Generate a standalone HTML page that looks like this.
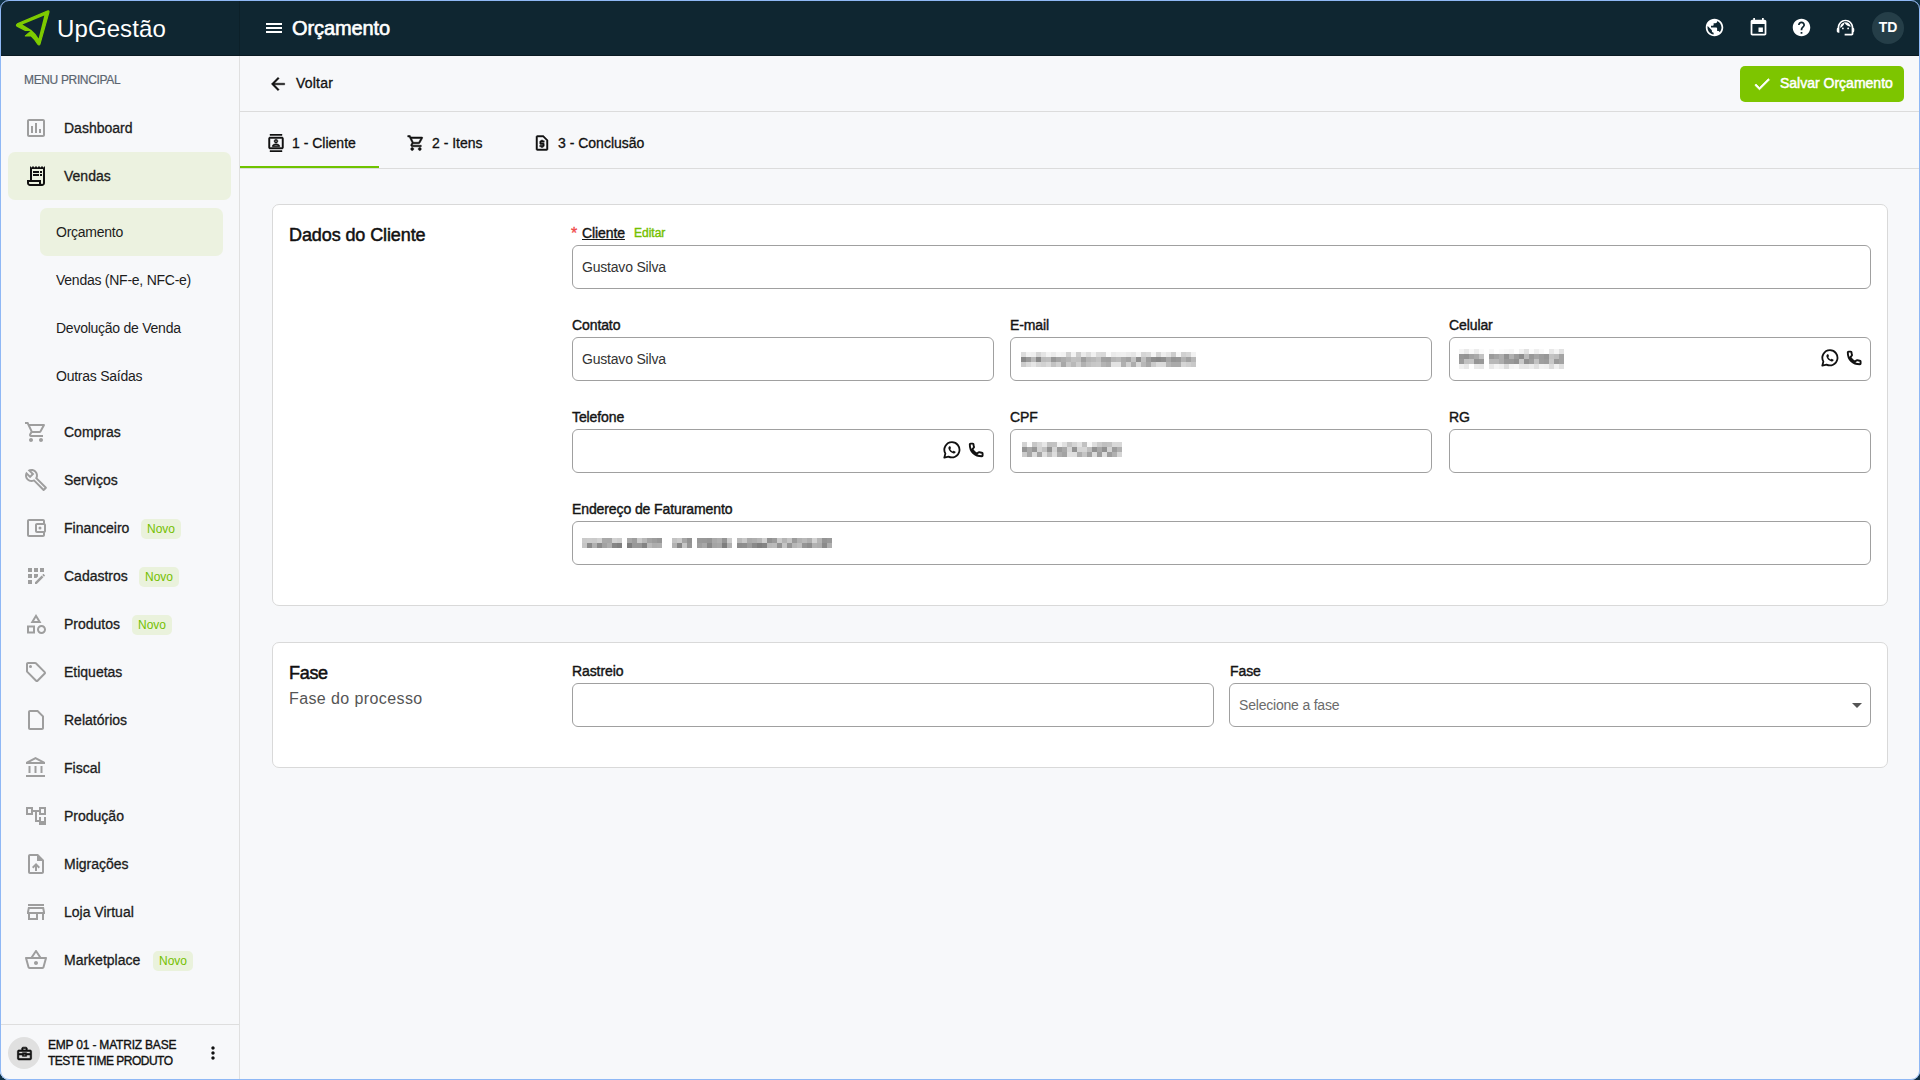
<!DOCTYPE html>
<html><head><meta charset="utf-8">
<style>
*{box-sizing:border-box;margin:0;padding:0}
html,body{width:1920px;height:1080px;overflow:hidden;background:#0f3246}
body{font-family:"Liberation Sans",sans-serif;color:#1c1c1c;position:relative}
.a{position:absolute}
.win{position:absolute;left:0;top:0;width:1920px;height:1080px;border-radius:9px;overflow:hidden;background:#f7f8fa}
.frame{position:absolute;left:0;top:0;width:1920px;height:1080px;border:1px solid #8fb8f5;border-radius:9px;pointer-events:none}
.hdr{position:absolute;left:0;top:0;width:1920px;height:56px;background:#0f2631;border-bottom:1px solid #0a1a22}
.side{position:absolute;left:0;top:56px;width:240px;height:1024px;background:#f7f8fa;border-right:1px solid #e0e0e0}
.med{-webkit-text-stroke:0.3px currentColor}
.t14{font-size:14px;line-height:16px;white-space:nowrap}
.ico{position:absolute;fill:#9e9e9e}
.mi{position:absolute;left:64px;font-size:14px;line-height:16px;white-space:nowrap;color:#1c1c1c;-webkit-text-stroke:0.3px #1c1c1c}
.si{position:absolute;left:56px;font-size:14px;line-height:16px;letter-spacing:-0.25px;white-space:nowrap;color:#1c1c1c}
.novo{position:absolute;height:20px;padding:0 6px;border-radius:5px;background:#eaf2dc;color:#74c000;font-size:12px;line-height:20px}
.card{position:absolute;left:272px;width:1616px;background:#fff;border:1px solid #d9d9d9;border-radius:7px}
.lbl{position:absolute;font-size:14px;line-height:16px;white-space:nowrap;letter-spacing:-0.1px;color:#141414;-webkit-text-stroke:0.4px #141414}
.inp{position:absolute;height:44px;border:1px solid #a0a0a0;border-radius:6px;background:#fff}
.val{position:absolute;left:9px;top:13px;font-size:14px;line-height:16px;color:#333;white-space:nowrap;letter-spacing:-0.2px}
.mz{position:absolute;background:repeating-linear-gradient(90deg,#c9c9c9 0 8px,#b3b3b3 8px 12px,#d8d8d8 12px 16px,#bdbdbd 16px 24px,#e6e6e6 24px 28px,#c2c2c2 28px 36px);opacity:.9}
</style></head><body>
<div class="win">
  <!-- HEADER -->
  <div class="hdr">
    <svg class="a" style="left:0;top:0" width="60" height="56" viewBox="0 0 60 56"><path fill="#7ecb00" stroke="#7ecb00" stroke-width="1.2" stroke-linejoin="round" d="M17.5 26.4 Q15.4 25.2 17.3 23.9 L47.4 11 Q49.3 10.4 48.9 12.4 L40 43.9 Q39.1 45.8 37.8 44.1 Q34.9 39.4 31 35.9 L25.4 35.9 L31.1 30.5 L25.8 30.6 Z"/><path fill="#0f2631" d="M22.4 24.5 L44.3 15.4 L38.6 38.6 Q35.8 33.4 31.4 30 Z"/><path fill="#0f2631" d="M24.8 31.3 L30.4 30.95 L24.9 35.3 Z"/></svg>
    <div class="a" style="left:57px;top:13.5px;font-size:24px;line-height:30px;color:#fff;white-space:nowrap;letter-spacing:0.1px">UpGestão</div>
    <div class="a" style="left:239px;top:0;width:1px;height:55px;background:#0c2029"></div>
    <div class="a" style="left:266px;top:23px;width:16px;height:2px;background:#fff"></div><div class="a" style="left:266px;top:27px;width:16px;height:2px;background:#fff"></div><div class="a" style="left:266px;top:31px;width:16px;height:2px;background:#fff"></div>
    <div class="a" style="left:292px;top:17px;font-size:20px;line-height:22px;color:#fff;-webkit-text-stroke:0.6px #fff;white-space:nowrap;letter-spacing:-0.1px">Orçamento</div>
    <!-- right icons -->
    <svg class="a" style="left:1703.6px;top:17.3px" width="21" height="21" viewBox="0 0 24 24"><path fill="#fff" d="M12 2C6.48 2 2 6.48 2 12s4.48 10 10 10 10-4.48 10-10S17.52 2 12 2zm-1 17.93c-3.95-.49-7-3.85-7-7.93 0-.62.08-1.21.21-1.79L9 15v1c0 1.1.9 2 2 2v1.93zm6.9-2.54c-.26-.81-1-1.39-1.9-1.39h-1v-3c0-.55-.45-1-1-1H8v-2h2c.55 0 1-.45 1-1V7h2c1.1 0 2-.9 2-2v-.41c2.93 1.19 5 4.06 5 7.41 0 2.08-.8 3.97-2.1 5.39z"/></svg>
    <svg class="a" style="left:1747.7px;top:17.3px" width="21" height="21" viewBox="0 0 24 24"><path fill="#fff" d="M17 12h-5v5h5v-5zM16 1v2H8V1H6v2H5c-1.11 0-1.99.9-1.99 2L3 19c0 1.1.89 2 2 2h14c1.1 0 2-.9 2-2V5c0-1.1-.9-2-2-2h-1V1h-2zm3 18H5V8h14v11z"/></svg>
    <svg class="a" style="left:1791.4px;top:17.3px" width="21" height="21" viewBox="0 0 24 24"><path fill="#fff" d="M12 2C6.48 2 2 6.48 2 12s4.48 10 10 10 10-4.48 10-10S17.52 2 12 2zm1 17h-2v-2h2v2zm2.07-7.75l-.9.92C13.45 12.9 13 13.5 13 15h-2v-.5c0-1.1.45-2.1 1.17-2.83l1.24-1.26c.37-.36.59-.86.59-1.41 0-1.1-.9-2-2-2s-2 .9-2 2H8c0-2.21 1.79-4 4-4s4 1.790 4 4c0 .88-.36 1.68-.93 2.25z"/></svg>
    <svg class="a" style="left:1835.1px;top:17.3px" width="21" height="21" viewBox="0 0 24 24"><g fill="#fff"><path d="M21 12.22C21 6.73 16.74 3 12 3c-4.69 0-9 3.65-9 9.28-.6.34-1 .98-1 1.72v2c0 1.1.9 2 2 2h1v-6.1c0-3.87 3.13-7 7-7s7 3.13 7 7V19h-8v2h8c1.1 0 2-.9 2-2v-1.22c.59-.31 1-.92 1-1.64v-2.3c0-.7-.41-1.310-1-1.62z"/><circle cx="9" cy="13" r="1"/><circle cx="15" cy="13" r="1"/><path d="M18 11.03C17.52 8.18 15.04 6 12.05 6c-3.03 0-6.29 2.51-6.03 6.45 2.47-1.01 4.330-3.21 4.86-5.890 1.31 2.63 4 4.44 7.12 4.47z"/></g></svg>
    <div class="a" style="left:1872px;top:12px;width:32px;height:32px;border-radius:50%;background:#253e48"></div>
    <div class="a" style="left:1872px;top:20px;width:32px;text-align:center;font-size:14px;line-height:14px;color:#fff;font-weight:bold">TD</div>
  </div>

  <!-- SIDEBAR -->
  <div class="side"></div>
  <div class="a" style="left:24px;top:73px;font-size:12px;line-height:14px;letter-spacing:-0.35px;color:#5b6570;-webkit-text-stroke:0.2px #5b6570;white-space:nowrap">MENU PRINCIPAL</div>
<div class="a" style="left:8px;top:152px;width:223px;height:48px;border-radius:7px;background:#ecf2e0"></div>
<div class="a" style="left:40px;top:208px;width:183px;height:48px;border-radius:7px;background:#ecf2e0"></div>
<svg class="a" style="left:24px;top:116px" width="24" height="24" viewBox="0 0 24 24" fill="#9e9e9e"><path d="M9 17H7v-7h2v7zm4 0h-2V7h2v10zm4 0h-2v-4h2v4zm2 2H5V5h14v14zm0-16H5c-1.1 0-2 .9-2 2v14c0 1.1.9 2 2 2h14c1.1 0 2-.9 2-2V5c0-1.1-.9-2-2-2z"/></svg>
<div class="mi" style="top:120px">Dashboard</div>
<svg class="a" style="left:24px;top:164px" width="24" height="24" viewBox="0 0 24 24" fill="#111"><path d="M19.5 3.5L18 2l-1.5 1.5L15 2l-1.5 1.5L12 2l-1.5 1.5L9 2 7.5 3.5 6 2v14H3v3c0 1.66 1.34 3 3 3h12c1.66 0 3-1.34 3-3V2l-1.5 1.5zM15 20H6c-.55 0-1-.45-1-1v-1h10v2zm4-1c0 .55-.45 1-1 1s-1-.45-1-1v-3H8V5h11v14z"/><path d="M9 7h6v2H9zm7 0h2v2h-2zm-7 3h6v2H9zm7 0h2v2h-2z"/></svg>
<div class="mi" style="top:168px">Vendas</div>
<svg class="a" style="left:24px;top:420px" width="24" height="24" viewBox="0 0 24 24" fill="#9e9e9e"><path d="M15.55 13c.75 0 1.41-.41 1.75-1.03l3.58-6.49c.37-.66-.11-1.48-.87-1.48H5.21l-.94-2H1v2h2l3.6 7.59-1.35 2.440C4.52 15.37 5.48 17 7 17h12v-2H7l1.1-2h7.45zM6.160 6h12.15l-2.76 5H8.53L6.16 6zM7 18c-1.1 0-1.99.9-1.99 2S5.9 22 7 22s2-.9 2-2-.9-2-2-2zm10 0c-1.1 0-1.99.9-1.99 2s.89 2 1.99 2 2-.9 2-2-.9-2-2-2z"/></svg>
<div class="mi" style="top:424px">Compras</div>
<svg class="a" style="left:24px;top:468px" width="24" height="24" viewBox="0 0 24 24" fill="#9e9e9e"><path d="M22.61 18.99l-9.08-9.08c.93-2.34.45-5.1-1.44-7C9.79.61 6.21.4 3.66 2.26L7.5 6.11 6.08 7.52 2.25 3.69C.39 6.23.6 9.82 2.9 12.11c1.86 1.86 4.57 2.35 6.89 1.48l9.11 9.11c.39.39 1.02.39 1.41 0l2.3-2.3c.4-.38.4-1.01 0-1.41zm-3 1.6l-9.46-9.46c-.61.45-1.29.72-2 .82-1.36.2-2.79-.21-3.83-1.25C3.37 9.76 2.93 8.5 3 7.26l3.09 3.09 4.24-4.24-3.09-3.09c1.24-.07 2.49.37 3.44 1.31 1.08 1.08 1.49 2.57 1.24 3.96-.12.71-.42 1.37-.88 1.96l9.45 9.45-.88.89z"/></svg>
<div class="mi" style="top:472px">Serviços</div>
<svg class="a" style="left:24px;top:516px" width="24" height="24" viewBox="0 0 24 24" fill="#9e9e9e"><path d="M21 7.28V5c0-1.1-.9-2-2-2H5c-1.11 0-2 .9-2 2v14c0 1.1.89 2 2 2h14c1.1 0 2-.9 2-2v-2.28c.59-.35 1-.98 1-1.72V9c0-.74-.41-1.37-1-1.72zM20 9v6h-7V9h7zM5 19V5h14v2h-6c-1.1 0-2 .9-2 2v6c0 1.1.9 2 2 2h6v2H5z"/><circle cx="16" cy="12" r="1.5"/></svg>
<div class="mi" style="top:520px">Financeiro</div>
<div class="novo" style="left:141px;top:519px">Novo</div>
<svg class="a" style="left:24px;top:564px" width="24" height="24" viewBox="0 0 24 24" fill="#9e9e9e"><path d="M10 4h4v4h-4zM4 16h4v4H4zm0-6h4v4H4zm0-6h4v4H4zm10 8.42V10h-4v4h2.42zm6.88-1.13l-1.17-1.17c-.16-.16-.42-.16-.58 0l-.88.88L20 12.75l.88-.88c.16-.16.16-.42 0-.58zM11 18.25V20h1.75l6.67-6.67-1.75-1.75zM16 4h4v4h-4z"/></svg>
<div class="mi" style="top:568px">Cadastros</div>
<div class="novo" style="left:139px;top:567px">Novo</div>
<svg class="a" style="left:24px;top:612px" width="24" height="24" viewBox="0 0 24 24" fill="#9e9e9e"><path d="M12 2l-5.5 9h11L12 2zm0 3.84L13.93 9h-3.87L12 5.84zM17.5 13c-2.49 0-4.5 2.01-4.5 4.5s2.01 4.5 4.5 4.5 4.5-2.01 4.5-4.5-2.01-4.5-4.5-4.5zm0 7c-1.38 0-2.5-1.12-2.5-2.5s1.12-2.5 2.5-2.5 2.5 1.12 2.5 2.5-1.12 2.5-2.5 2.5zM3 21.5h8v-8H3v8zm2-6h4v4H5v-4z"/></svg>
<div class="mi" style="top:616px">Produtos</div>
<div class="novo" style="left:132px;top:615px">Novo</div>
<svg class="a" style="left:24px;top:660px" width="24" height="24" viewBox="0 0 24 24" fill="#9e9e9e"><path d="M21.41 11.41l-8.83-8.83c-.37-.37-.88-.58-1.41-.58H4c-1.1 0-2 .9-2 2v7.17c0 .53.21 1.04.59 1.41l8.83 8.83c.78.78 2.05.78 2.83 0l7.17-7.17c.78-.78.78-2.04-.01-2.83zM12.83 20L4 11.17V4h7.17L20 12.83 12.83 20z"/><circle cx="6.5" cy="6.5" r="1.5"/></svg>
<div class="mi" style="top:664px">Etiquetas</div>
<svg class="a" style="left:24px;top:708px" width="24" height="24" viewBox="0 0 24 24" fill="#9e9e9e"><path d="M14 2H6c-1.1 0-1.99.9-1.99 2L4 20c0 1.1.89 2 1.99 2H18c1.1 0 2-.9 2-2V8l-6-6zm4 18H6V4h7.17L18 8.83V20z"/></svg>
<div class="mi" style="top:712px">Relatórios</div>
<svg class="a" style="left:24px;top:756px" width="24" height="24" viewBox="0 0 24 24" fill="#9e9e9e"><path d="M6.5 10h-2v7h2v-7zm6 0h-2v7h2v-7zm8.5 9H2v2h19v-2zm-2.5-9h-2v7h2v-7zm-7-6.74L16.71 6H6.29l5.21-2.74m0-2.26L2 6v2h19V6l-9.5-5z"/></svg>
<div class="mi" style="top:760px">Fiscal</div>
<svg class="a" style="left:24px;top:804px" width="24" height="24" viewBox="0 0 24 24" fill="#9e9e9e"><path fill-rule="evenodd" d="M22 11V3h-7v3H9V3H2v8h7V8h2v10h4v3h7v-8h-7v3h-2V8h2v3h7zM7 9H4V5h3v4zm10 4h3v4h-3v-4zm0-8h3v4h-3V5z"/></svg>
<div class="mi" style="top:808px">Produção</div>
<svg class="a" style="left:24px;top:852px" width="24" height="24" viewBox="0 0 24 24" fill="#9e9e9e"><path d="M14 2H6c-1.1 0-1.99.9-1.99 2L4 20c0 1.1.89 2 1.99 2H18c1.1 0 2-.9 2-2V8l-6-6zm4 18H6V4h7v5h5v11zM8 15.01l1.41 1.41L11 14.84V19h2v-4.16l1.59 1.59L16 15.01 12.01 11 8 15.01z"/></svg>
<div class="mi" style="top:856px">Migrações</div>
<svg class="a" style="left:24px;top:900px" width="24" height="24" viewBox="0 0 24 24" fill="#9e9e9e"><path d="M18.36 9l.6 3H5.04l.6-3h12.72M20 4H4v2h16V4zm0 3H4l-1 5v2h1v6h10v-6h4v6h2v-6h1v-2l-1-5zM6 18v-4h6v4H6z"/></svg>
<div class="mi" style="top:904px">Loja Virtual</div>
<svg class="a" style="left:24px;top:948px" width="24" height="24" viewBox="0 0 24 24" fill="#9e9e9e"><path d="M22 9h-4.79l-4.38-6.56c-.19-.28-.51-.42-.83-.42s-.64.14-.83.43L6.79 9H2c-.55 0-1 .45-1 1 0 .09.01.18.04.27l2.54 9.27c.23.84 1 1.46 1.92 1.46h13c.92 0 1.69-.62 1.93-1.46l2.54-9.27L23 10c0-.55-.45-1-1-1zM12 4.8L14.8 9H9.2L12 4.8zM18.5 19l-12.99.01L3.31 11H20.7l-2.2 8zM12 13c-1.1 0-2 .9-2 2s.9 2 2 2 2-.9 2-2-.9-2-2-2z"/></svg>
<div class="mi" style="top:952px">Marketplace</div>
<div class="novo" style="left:153px;top:951px">Novo</div>
<div class="si" style="top:224px">Orçamento</div>
<div class="si" style="top:272px">Vendas (NF-e, NFC-e)</div>
<div class="si" style="top:320px">Devolução de Venda</div>
<div class="si" style="top:368px">Outras Saídas</div>
  <!-- footer -->
  <div class="a" style="left:0;top:1024px;width:239px;height:1px;background:#dedede"></div>
  <div class="a" style="left:8px;top:1037px;width:32px;height:32px;border-radius:50%;background:#e0e0e0"></div>
  <svg class="a" style="left:15.5px;top:1044.5px" width="17" height="17" viewBox="0 0 24 24" fill="#111" stroke="#111" stroke-width="0.9"><path d="M20 7h-4V5c0-1.1-.9-2-2-2h-4c-1.1 0-2 .9-2 2v2H4c-1.1 0-2 .9-2 2v10c0 1.1.9 2 2 2h16c1.1 0 2-.9 2-2V9c0-1.1-.9-2-2-2zM10 5h4v2h-4V5zm10 14H4v-5h5v2h6v-2h5v5zm-9-4v-2h2v2h-2zm9-3h-5v-1H9v1H4V9h16v3z"/></svg>
  <div class="a" style="left:48px;top:1037px;font-size:12px;line-height:16px;letter-spacing:-0.2px;color:#111;-webkit-text-stroke:0.35px #111;white-space:nowrap">EMP 01 - MATRIZ BASE<br><span style="letter-spacing:-0.5px">TESTE TIME PRODUTO</span></div>
  <svg class="a" style="left:203px;top:1043px" width="20" height="20" viewBox="0 0 24 24" fill="#111"><path d="M12 8c1.1 0 2-.9 2-2s-.9-2-2-2-2 .9-2 2 .9 2 2 2zm0 2c-1.1 0-2 .9-2 2s.9 2 2 2 2-.9 2-2-.9-2-2-2zm0 6c-1.1 0-2 .9-2 2s.9 2 2 2 2-.9 2-2-.9-2-2-2z"/></svg>

  <!-- MAIN -->
  <div class="a" style="left:240px;top:111px;width:1680px;height:1px;background:#dcdcdc"></div>
  <svg class="a" style="left:268px;top:74px" width="20" height="20" viewBox="0 0 24 24"><path fill="#111" stroke="#111" stroke-width="0.5" d="M20 11H7.83l5.59-5.59L12 4l-8 8 8 8 1.41-1.41L7.83 13H20v-2z"/></svg>
  <div class="a med" style="left:296px;top:75px;font-size:14px;line-height:16px;color:#111;letter-spacing:0.2px">Voltar</div>
  <div class="a" style="left:1740px;top:66px;width:164px;height:36px;border-radius:5px;background:#7dc500"></div>
  <svg class="a" style="left:1752.2px;top:73.5px" width="20" height="20" viewBox="0 0 24 24"><path fill="#fff" stroke="#fff" stroke-width="0.9" d="M9 16.17L4.83 12l-1.42 1.41L9 19 21 7l-1.41-1.41z"/></svg>
  <div class="a" style="left:1780px;top:75.3px;font-size:14px;line-height:16px;color:#fff;white-space:nowrap;-webkit-text-stroke:0.5px #fff">Salvar Orçamento</div>

  <!-- TABS -->
  <div class="a" style="left:240px;top:168px;width:1680px;height:1px;background:#dcdcdc"></div>
  <div class="a" style="left:240px;top:166px;width:139px;height:2px;background:#6fc300"></div>
  <svg class="a" style="left:266.5px;top:134px" width="18" height="18" viewBox="0 0 24 24" fill="#111" stroke="#111" stroke-width="0.6"><path d="M20 0H4v2h16V0zM4 24h16v-2H4v2zM20 4H4c-1.1 0-2 .9-2 2v12c0 1.1.9 2 2 2h16c1.1 0 2-.9 2-2V6c0-1.1-.9-2-2-2zm0 14H4V6h16v12zm-8-6c1.38 0 2.5-1.12 2.5-2.5S13.38 7 12 7 9.5 8.12 9.5 9.5 10.62 12 12 12zm0-3.5c.55 0 1 .45 1 1s-.45 1-1 1-1-.45-1-1 .45-1 1-1zm5 7.49C17 13.9 13.69 13 12 13s-5 .9-5 2.99V17h10v-1.01zm-8.190-.49c.61-.52 2.03-1 3.19-1 1.17 0 2.59.48 3.2 1H8.81z"/></svg>
  <div class="a med" style="left:292px;top:135px;font-size:14px;line-height:16px;color:#111;white-space:nowrap">1 - Cliente</div>
  <svg class="a" style="left:406.5px;top:134px" width="18" height="18" viewBox="0 0 24 24" fill="#111" stroke="#111" stroke-width="0.7"><path d="M15.55 13c.75 0 1.41-.41 1.75-1.03l3.58-6.49c.37-.66-.11-1.48-.87-1.48H5.21l-.94-2H1v2h2l3.6 7.59-1.35 2.44C4.52 15.37 5.48 17 7 17h12v-2H7l1.1-2h7.45zM6.16 6h12.15l-2.76 5H8.53L6.16 6zM7 18c-1.1 0-1.99.9-1.99 2S5.9 22 7 22s2-.9 2-2-.9-2-2-2zm10 0c-1.1 0-1.99.9-1.99 2s.89 2 1.99 2 2-.9 2-2-.9-2-2-2z"/></svg>
  <div class="a med" style="left:432px;top:135px;font-size:14px;line-height:16px;color:#111;white-space:nowrap">2 - Itens</div>
  <svg class="a" style="left:533px;top:134px" width="18" height="18" viewBox="0 0 24 24" fill="#111" stroke="#111" stroke-width="0.6"><path d="M14 2H6c-1.1 0-1.99.9-1.99 2L4 20c0 1.1.89 2 1.99 2H18c1.1 0 2-.9 2-2V8l-6-6zm4 18H6V4h7.17L18 8.83V20z"/><path d="M11 18h2v-1h1c.55 0 1-.45 1-1v-3c0-.55-.45-1-1-1h-3v-1h4V9h-2V8h-2v1h-1c-.55 0-1 .45-1 1v3c0 .55.45 1 1 1h3v1H9v2h2v1z"/></svg>
  <div class="a med" style="left:558px;top:135px;font-size:14px;line-height:16px;color:#111;white-space:nowrap">3 - Conclusão</div>

  <!-- CARD 1 -->
  <div class="card" style="top:204px;height:402px"></div>
  <div class="a" style="left:289px;top:225px;font-size:18px;line-height:20px;color:#111;-webkit-text-stroke:0.5px #111;white-space:nowrap;letter-spacing:-0.1px">Dados do Cliente</div>
  <div class="lbl" style="left:571px;top:226px;color:#f04848;-webkit-text-stroke:0.3px #f04848;font-size:16px">*</div>
  <div class="lbl" style="left:582px;top:225px;text-decoration:underline">Cliente</div>
  <div class="a" style="left:634px;top:226px;font-size:12px;line-height:14px;color:#74c000;-webkit-text-stroke:0.4px #74c000">Editar</div>
  <div class="inp" style="left:572px;top:245px;width:1299px"><div class="val">Gustavo Silva</div></div>

  <div class="lbl" style="left:572px;top:317px">Contato</div>
  <div class="inp" style="left:572px;top:337px;width:422px"><div class="val">Gustavo Silva</div></div>
  <div class="lbl" style="left:1010px;top:317px">E-mail</div>
  <div class="inp" style="left:1010px;top:337px;width:422px"></div>
  <div class="lbl" style="left:1449px;top:317px">Celular</div>
  <div class="inp" style="left:1449px;top:337px;width:422px"></div>
  <svg class="a" style="left:1821px;top:349px" width="18" height="18" viewBox="0 0 18 18"><path d="M9 1.2a7.6 7.6 0 0 0-6.6 11.4L1.3 16.7l4.2-1.1A7.6 7.6 0 1 0 9 1.2z" fill="none" stroke="#111" stroke-width="1.8" stroke-linejoin="round"/><path d="M6.2 5.3c.5-.3 1-.2 1.2.3l.5 1.2c.1.3 0 .6-.3.9l-.4.4c.5 1.1 1.4 2 2.5 2.5l.4-.4c.3-.3.6-.4.9-.3l1.2.5c.5.2.6.7.3 1.2-.6.9-1.5 1.1-2.5.7C8 11.7 6.4 10.1 5.6 8.1c-.4-1-.2-2 .6-2.8z" fill="#111"/></svg><svg class="a" style="left:1844.5px;top:350px" width="17" height="17" viewBox="0 0 17 17"><path d="M3.6 1.6h2.2c.5 0 .7.3.7.7 0 .9.2 1.9.5 2.6.1.3 0 .6-.2.8L5.4 7.1c1 2.1 2.7 3.8 4.6 4.7l1.4-1.4c.2-.2.5-.3.8-.2.8.3 1.8.5 2.7.5.4 0 .7.3.7.7v2.1c0 .5-.3.8-.7.8C7.6 14.3 2.8 9.5 2.8 2.4c0-.5.3-.8.8-.8z" fill="none" stroke="#111" stroke-width="1.9" stroke-linejoin="round"/></svg>

  <div class="lbl" style="left:572px;top:409px">Telefone</div>
  <div class="inp" style="left:572px;top:429px;width:422px"></div>
  <svg class="a" style="left:943px;top:441px" width="18" height="18" viewBox="0 0 18 18"><path d="M9 1.2a7.6 7.6 0 0 0-6.6 11.4L1.3 16.7l4.2-1.1A7.6 7.6 0 1 0 9 1.2z" fill="none" stroke="#111" stroke-width="1.8" stroke-linejoin="round"/><path d="M6.2 5.3c.5-.3 1-.2 1.2.3l.5 1.2c.1.3 0 .6-.3.9l-.4.4c.5 1.1 1.4 2 2.5 2.5l.4-.4c.3-.3.6-.4.9-.3l1.2.5c.5.2.6.7.3 1.2-.6.9-1.5 1.1-2.5.7C8 11.7 6.4 10.1 5.6 8.1c-.4-1-.2-2 .6-2.8z" fill="#111"/></svg><svg class="a" style="left:966.5px;top:442px" width="17" height="17" viewBox="0 0 17 17"><path d="M3.6 1.6h2.2c.5 0 .7.3.7.7 0 .9.2 1.9.5 2.6.1.3 0 .6-.2.8L5.4 7.1c1 2.1 2.7 3.8 4.6 4.7l1.4-1.4c.2-.2.5-.3.8-.2.8.3 1.8.5 2.7.5.4 0 .7.3.7.7v2.1c0 .5-.3.8-.7.8C7.6 14.3 2.8 9.5 2.8 2.4c0-.5.3-.8.8-.8z" fill="none" stroke="#111" stroke-width="1.9" stroke-linejoin="round"/></svg>
  <div class="lbl" style="left:1010px;top:409px">CPF</div>
  <div class="inp" style="left:1010px;top:429px;width:422px"></div>
  <div class="lbl" style="left:1449px;top:409px">RG</div>
  <div class="inp" style="left:1449px;top:429px;width:422px"></div>

  <div class="lbl" style="left:572px;top:501px">Endereço de Faturamento</div>
  <div class="inp" style="left:572px;top:521px;width:1299px"></div>
<div class="a" style="left:1021px;top:352px;width:175px;height:15px;filter:blur(0.4px)"><div style="position:absolute;left:0;top:0px;width:175px;height:5px;background:linear-gradient(90deg,rgb(220,220,220) 0px 5px,rgb(242,242,242) 5px 10px,rgb(239,239,239) 10px 15px,rgb(213,213,213) 15px 20px,rgb(228,228,228) 20px 25px,rgb(243,243,243) 25px 30px,rgb(235,235,235) 30px 35px,rgb(245,245,245) 35px 40px,rgb(242,242,242) 40px 45px,rgb(209,209,209) 45px 50px,rgb(243,243,243) 50px 55px,rgb(205,205,205) 55px 60px,rgb(235,235,235) 60px 65px,rgb(221,221,221) 65px 70px,rgb(240,240,240) 70px 75px,rgb(219,219,219) 75px 80px,rgb(217,217,217) 80px 85px,rgb(250,250,250) 85px 90px,rgb(235,235,235) 90px 95px,rgb(239,239,239) 95px 100px,rgb(240,240,240) 100px 105px,rgb(235,235,235) 105px 110px,rgb(230,230,230) 110px 115px,rgb(245,245,245) 115px 120px,rgb(214,214,214) 120px 125px,rgb(219,219,219) 125px 130px,rgb(245,245,245) 130px 135px,rgb(214,214,214) 135px 140px,rgb(238,238,238) 140px 145px,rgb(229,229,229) 145px 150px,rgb(205,205,205) 150px 155px,rgb(247,247,247) 155px 160px,rgb(209,209,209) 160px 165px,rgb(215,215,215) 165px 170px,rgb(242,242,242) 170px 175px)"></div><div style="position:absolute;left:0;top:5px;width:175px;height:5px;background:linear-gradient(90deg,rgb(137,137,137) 0px 5px,rgb(154,154,154) 5px 10px,rgb(184,184,184) 10px 15px,rgb(136,136,136) 15px 20px,rgb(187,187,187) 20px 25px,rgb(190,190,190) 25px 30px,rgb(152,152,152) 30px 35px,rgb(165,165,165) 35px 40px,rgb(173,173,173) 40px 45px,rgb(181,181,181) 45px 50px,rgb(193,193,193) 50px 55px,rgb(191,191,191) 55px 60px,rgb(159,159,159) 60px 65px,rgb(180,180,180) 65px 70px,rgb(185,185,185) 70px 75px,rgb(193,193,193) 75px 80px,rgb(162,162,162) 80px 85px,rgb(160,160,160) 85px 90px,rgb(181,181,181) 90px 95px,rgb(186,186,186) 95px 100px,rgb(171,171,171) 100px 105px,rgb(163,163,163) 105px 110px,rgb(194,194,194) 110px 115px,rgb(143,143,143) 115px 120px,rgb(191,191,191) 120px 125px,rgb(158,158,158) 125px 130px,rgb(141,141,141) 130px 135px,rgb(137,137,137) 135px 140px,rgb(143,143,143) 140px 145px,rgb(166,166,166) 145px 150px,rgb(148,148,148) 150px 155px,rgb(151,151,151) 155px 160px,rgb(178,178,178) 160px 165px,rgb(162,162,162) 165px 170px,rgb(184,184,184) 170px 175px)"></div><div style="position:absolute;left:0;top:10px;width:175px;height:5px;background:linear-gradient(90deg,rgb(203,203,203) 0px 5px,rgb(218,218,218) 5px 10px,rgb(229,229,229) 10px 15px,rgb(214,214,214) 15px 20px,rgb(209,209,209) 20px 25px,rgb(217,217,217) 25px 30px,rgb(194,194,194) 30px 35px,rgb(208,208,208) 35px 40px,rgb(168,168,168) 40px 45px,rgb(200,200,200) 45px 50px,rgb(185,185,185) 50px 55px,rgb(206,206,206) 55px 60px,rgb(178,178,178) 60px 65px,rgb(192,192,192) 65px 70px,rgb(199,199,199) 70px 75px,rgb(201,201,201) 75px 80px,rgb(180,180,180) 80px 85px,rgb(173,173,173) 85px 90px,rgb(226,226,226) 90px 95px,rgb(226,226,226) 95px 100px,rgb(176,176,176) 100px 105px,rgb(209,209,209) 105px 110px,rgb(173,173,173) 110px 115px,rgb(217,217,217) 115px 120px,rgb(184,184,184) 120px 125px,rgb(167,167,167) 125px 130px,rgb(202,202,202) 130px 135px,rgb(219,219,219) 135px 140px,rgb(218,218,218) 140px 145px,rgb(180,180,180) 145px 150px,rgb(170,170,170) 150px 155px,rgb(170,170,170) 155px 160px,rgb(213,213,213) 160px 165px,rgb(207,207,207) 165px 170px,rgb(200,200,200) 170px 175px)"></div></div>
<div class="a" style="left:1459px;top:349px;width:105px;height:20px;filter:blur(0.4px)"><div style="position:absolute;left:0;top:0px;width:105px;height:5px;background:linear-gradient(90deg,rgb(244,244,244) 0px 5px,rgb(233,233,233) 5px 10px,rgb(248,248,248) 10px 15px,rgb(236,236,236) 15px 20px,rgb(250,250,250) 20px 25px,rgb(255,255,255) 25px 30px,rgb(247,247,247) 30px 35px,rgb(255,255,255) 35px 40px,rgb(251,251,251) 40px 45px,rgb(248,248,248) 45px 50px,rgb(245,245,245) 50px 55px,rgb(254,254,254) 55px 60px,rgb(241,241,241) 60px 65px,rgb(225,225,225) 65px 70px,rgb(251,251,251) 70px 75px,rgb(239,239,239) 75px 80px,rgb(249,249,249) 80px 85px,rgb(255,255,255) 85px 90px,rgb(232,232,232) 90px 95px,rgb(245,245,245) 95px 100px,rgb(226,226,226) 100px 105px)"></div><div style="position:absolute;left:0;top:5px;width:105px;height:5px;background:linear-gradient(90deg,rgb(150,150,150) 0px 5px,rgb(147,147,147) 5px 10px,rgb(163,163,163) 10px 15px,rgb(170,170,170) 15px 20px,rgb(195,195,195) 20px 25px,rgb(255,255,255) 25px 30px,rgb(155,155,155) 30px 35px,rgb(164,164,164) 35px 40px,rgb(174,174,174) 40px 45px,rgb(146,146,146) 45px 50px,rgb(176,176,176) 50px 55px,rgb(155,155,155) 55px 60px,rgb(140,140,140) 60px 65px,rgb(186,186,186) 65px 70px,rgb(153,153,153) 70px 75px,rgb(166,166,166) 75px 80px,rgb(157,157,157) 80px 85px,rgb(151,151,151) 85px 90px,rgb(195,195,195) 90px 95px,rgb(189,189,189) 95px 100px,rgb(164,164,164) 100px 105px)"></div><div style="position:absolute;left:0;top:10px;width:105px;height:5px;background:linear-gradient(90deg,rgb(155,155,155) 0px 5px,rgb(193,193,193) 5px 10px,rgb(196,196,196) 10px 15px,rgb(149,149,149) 15px 20px,rgb(153,153,153) 20px 25px,rgb(255,255,255) 25px 30px,rgb(184,184,184) 30px 35px,rgb(184,184,184) 35px 40px,rgb(173,173,173) 40px 45px,rgb(153,153,153) 45px 50px,rgb(153,153,153) 50px 55px,rgb(145,145,145) 55px 60px,rgb(200,200,200) 60px 65px,rgb(145,145,145) 65px 70px,rgb(158,158,158) 70px 75px,rgb(194,194,194) 75px 80px,rgb(158,158,158) 80px 85px,rgb(155,155,155) 85px 90px,rgb(200,200,200) 90px 95px,rgb(155,155,155) 95px 100px,rgb(163,163,163) 100px 105px)"></div><div style="position:absolute;left:0;top:15px;width:105px;height:5px;background:linear-gradient(90deg,rgb(240,240,240) 0px 5px,rgb(232,232,232) 5px 10px,rgb(254,254,254) 10px 15px,rgb(233,233,233) 15px 20px,rgb(231,231,231) 20px 25px,rgb(255,255,255) 25px 30px,rgb(232,232,232) 30px 35px,rgb(244,244,244) 35px 40px,rgb(239,239,239) 40px 45px,rgb(221,221,221) 45px 50px,rgb(243,243,243) 50px 55px,rgb(246,246,246) 55px 60px,rgb(230,230,230) 60px 65px,rgb(229,229,229) 65px 70px,rgb(236,236,236) 70px 75px,rgb(224,224,224) 75px 80px,rgb(241,241,241) 80px 85px,rgb(239,239,239) 85px 90px,rgb(220,220,220) 90px 95px,rgb(241,241,241) 95px 100px,rgb(224,224,224) 100px 105px)"></div></div>
<div class="a" style="left:1022px;top:442px;width:100px;height:15px;filter:blur(0.4px)"><div style="position:absolute;left:0;top:0px;width:100px;height:5px;background:linear-gradient(90deg,rgb(210,210,210) 0px 5px,rgb(250,250,250) 5px 10px,rgb(199,199,199) 10px 15px,rgb(215,215,215) 15px 20px,rgb(231,231,231) 20px 25px,rgb(193,193,193) 25px 30px,rgb(194,194,194) 30px 35px,rgb(242,242,242) 35px 40px,rgb(224,224,224) 40px 45px,rgb(196,196,196) 45px 50px,rgb(213,213,213) 50px 55px,rgb(227,227,227) 55px 60px,rgb(193,193,193) 60px 65px,rgb(248,248,248) 65px 70px,rgb(222,222,222) 70px 75px,rgb(203,203,203) 75px 80px,rgb(192,192,192) 80px 85px,rgb(195,195,195) 85px 90px,rgb(217,217,217) 90px 95px,rgb(216,216,216) 95px 100px)"></div><div style="position:absolute;left:0;top:5px;width:100px;height:5px;background:linear-gradient(90deg,rgb(148,148,148) 0px 5px,rgb(170,170,170) 5px 10px,rgb(151,151,151) 10px 15px,rgb(210,210,210) 15px 20px,rgb(194,194,194) 20px 25px,rgb(147,147,147) 25px 30px,rgb(212,212,212) 30px 35px,rgb(155,155,155) 35px 40px,rgb(168,168,168) 40px 45px,rgb(214,214,214) 45px 50px,rgb(147,147,147) 50px 55px,rgb(213,213,213) 55px 60px,rgb(214,214,214) 60px 65px,rgb(190,190,190) 65px 70px,rgb(146,146,146) 70px 75px,rgb(168,168,168) 75px 80px,rgb(145,145,145) 80px 85px,rgb(211,211,211) 85px 90px,rgb(157,157,157) 90px 95px,rgb(177,177,177) 95px 100px)"></div><div style="position:absolute;left:0;top:10px;width:100px;height:5px;background:linear-gradient(90deg,rgb(203,203,203) 0px 5px,rgb(168,168,168) 5px 10px,rgb(219,219,219) 10px 15px,rgb(165,165,165) 15px 20px,rgb(223,223,223) 20px 25px,rgb(189,189,189) 25px 30px,rgb(221,221,221) 30px 35px,rgb(173,173,173) 35px 40px,rgb(163,163,163) 40px 45px,rgb(224,224,224) 45px 50px,rgb(223,223,223) 50px 55px,rgb(174,174,174) 55px 60px,rgb(197,197,197) 60px 65px,rgb(162,162,162) 65px 70px,rgb(220,220,220) 70px 75px,rgb(158,158,158) 75px 80px,rgb(222,222,222) 80px 85px,rgb(157,157,157) 85px 90px,rgb(176,176,176) 90px 95px,rgb(213,213,213) 95px 100px)"></div></div>
<div class="a" style="left:582px;top:538px;width:250px;height:10px;filter:blur(0.4px)"><div style="position:absolute;left:0;top:0px;width:250px;height:5px;background:linear-gradient(90deg,rgb(202,202,202) 0px 5px,rgb(204,204,204) 5px 10px,rgb(202,202,202) 10px 15px,rgb(210,210,210) 15px 20px,rgb(169,169,169) 20px 25px,rgb(168,168,168) 25px 30px,rgb(210,210,210) 30px 35px,rgb(205,205,205) 35px 40px,rgb(255,255,255) 40px 45px,rgb(168,168,168) 45px 50px,rgb(157,157,157) 50px 55px,rgb(202,202,202) 55px 60px,rgb(183,183,183) 60px 65px,rgb(163,163,163) 65px 70px,rgb(156,156,156) 70px 75px,rgb(150,150,150) 75px 80px,rgb(255,255,255) 80px 85px,rgb(255,255,255) 85px 90px,rgb(195,195,195) 90px 95px,rgb(202,202,202) 95px 100px,rgb(165,165,165) 100px 105px,rgb(146,146,146) 105px 110px,rgb(255,255,255) 110px 115px,rgb(153,153,153) 115px 120px,rgb(152,152,152) 120px 125px,rgb(149,149,149) 125px 130px,rgb(169,169,169) 130px 135px,rgb(175,175,175) 135px 140px,rgb(148,148,148) 140px 145px,rgb(204,204,204) 145px 150px,rgb(255,255,255) 150px 155px,rgb(186,186,186) 155px 160px,rgb(201,201,201) 160px 165px,rgb(170,170,170) 165px 170px,rgb(174,174,174) 170px 175px,rgb(182,182,182) 175px 180px,rgb(208,208,208) 180px 185px,rgb(145,145,145) 185px 190px,rgb(155,155,155) 190px 195px,rgb(203,203,203) 195px 200px,rgb(180,180,180) 200px 205px,rgb(197,197,197) 205px 210px,rgb(155,155,155) 210px 215px,rgb(177,177,177) 215px 220px,rgb(185,185,185) 220px 225px,rgb(174,174,174) 225px 230px,rgb(210,210,210) 230px 235px,rgb(181,181,181) 235px 240px,rgb(148,148,148) 240px 245px,rgb(153,153,153) 245px 250px)"></div><div style="position:absolute;left:0;top:5px;width:250px;height:5px;background:linear-gradient(90deg,rgb(197,197,197) 0px 5px,rgb(138,138,138) 5px 10px,rgb(176,176,176) 10px 15px,rgb(138,138,138) 15px 20px,rgb(162,162,162) 20px 25px,rgb(174,174,174) 25px 30px,rgb(133,133,133) 30px 35px,rgb(127,127,127) 35px 40px,rgb(255,255,255) 40px 45px,rgb(125,125,125) 45px 50px,rgb(152,152,152) 50px 55px,rgb(151,151,151) 55px 60px,rgb(131,131,131) 60px 65px,rgb(185,185,185) 65px 70px,rgb(173,173,173) 70px 75px,rgb(175,175,175) 75px 80px,rgb(255,255,255) 80px 85px,rgb(255,255,255) 85px 90px,rgb(178,178,178) 90px 95px,rgb(134,134,134) 95px 100px,rgb(197,197,197) 100px 105px,rgb(150,150,150) 105px 110px,rgb(255,255,255) 110px 115px,rgb(159,159,159) 115px 120px,rgb(168,168,168) 120px 125px,rgb(136,136,136) 125px 130px,rgb(164,164,164) 130px 135px,rgb(167,167,167) 135px 140px,rgb(126,126,126) 140px 145px,rgb(177,177,177) 145px 150px,rgb(255,255,255) 150px 155px,rgb(140,140,140) 155px 160px,rgb(142,142,142) 160px 165px,rgb(156,156,156) 165px 170px,rgb(137,137,137) 170px 175px,rgb(126,126,126) 175px 180px,rgb(132,132,132) 180px 185px,rgb(184,184,184) 185px 190px,rgb(187,187,187) 190px 195px,rgb(147,147,147) 195px 200px,rgb(196,196,196) 200px 205px,rgb(149,149,149) 205px 210px,rgb(182,182,182) 210px 215px,rgb(190,190,190) 215px 220px,rgb(149,149,149) 220px 225px,rgb(141,141,141) 225px 230px,rgb(178,178,178) 230px 235px,rgb(174,174,174) 235px 240px,rgb(139,139,139) 240px 245px,rgb(175,175,175) 245px 250px)"></div></div>


  <!-- CARD 2 -->
  <div class="card" style="top:642px;height:126px"></div>
  <div class="a" style="left:289px;top:663px;font-size:18px;line-height:20px;color:#111;-webkit-text-stroke:0.5px #111;white-space:nowrap;letter-spacing:-0.3px">Fase</div>
  <div class="a" style="left:289px;top:690px;font-size:16px;line-height:18px;color:#555;letter-spacing:0.4px;white-space:nowrap">Fase do processo</div>
  <div class="lbl" style="left:572px;top:663px">Rastreio</div>
  <div class="inp" style="left:572px;top:683px;width:642px"></div>
  <div class="lbl" style="left:1230px;top:663px">Fase</div>
  <div class="inp" style="left:1229px;top:683px;width:642px"><div class="val" style="color:#6b6b6b">Selecione a fase</div></div>
  <svg class="a" style="left:1845px;top:693px" width="24" height="24" viewBox="0 0 24 24" fill="#555"><path d="M7 10l5 5 5-5z"/></svg>

</div>
<div class="frame"></div>
</body></html>
